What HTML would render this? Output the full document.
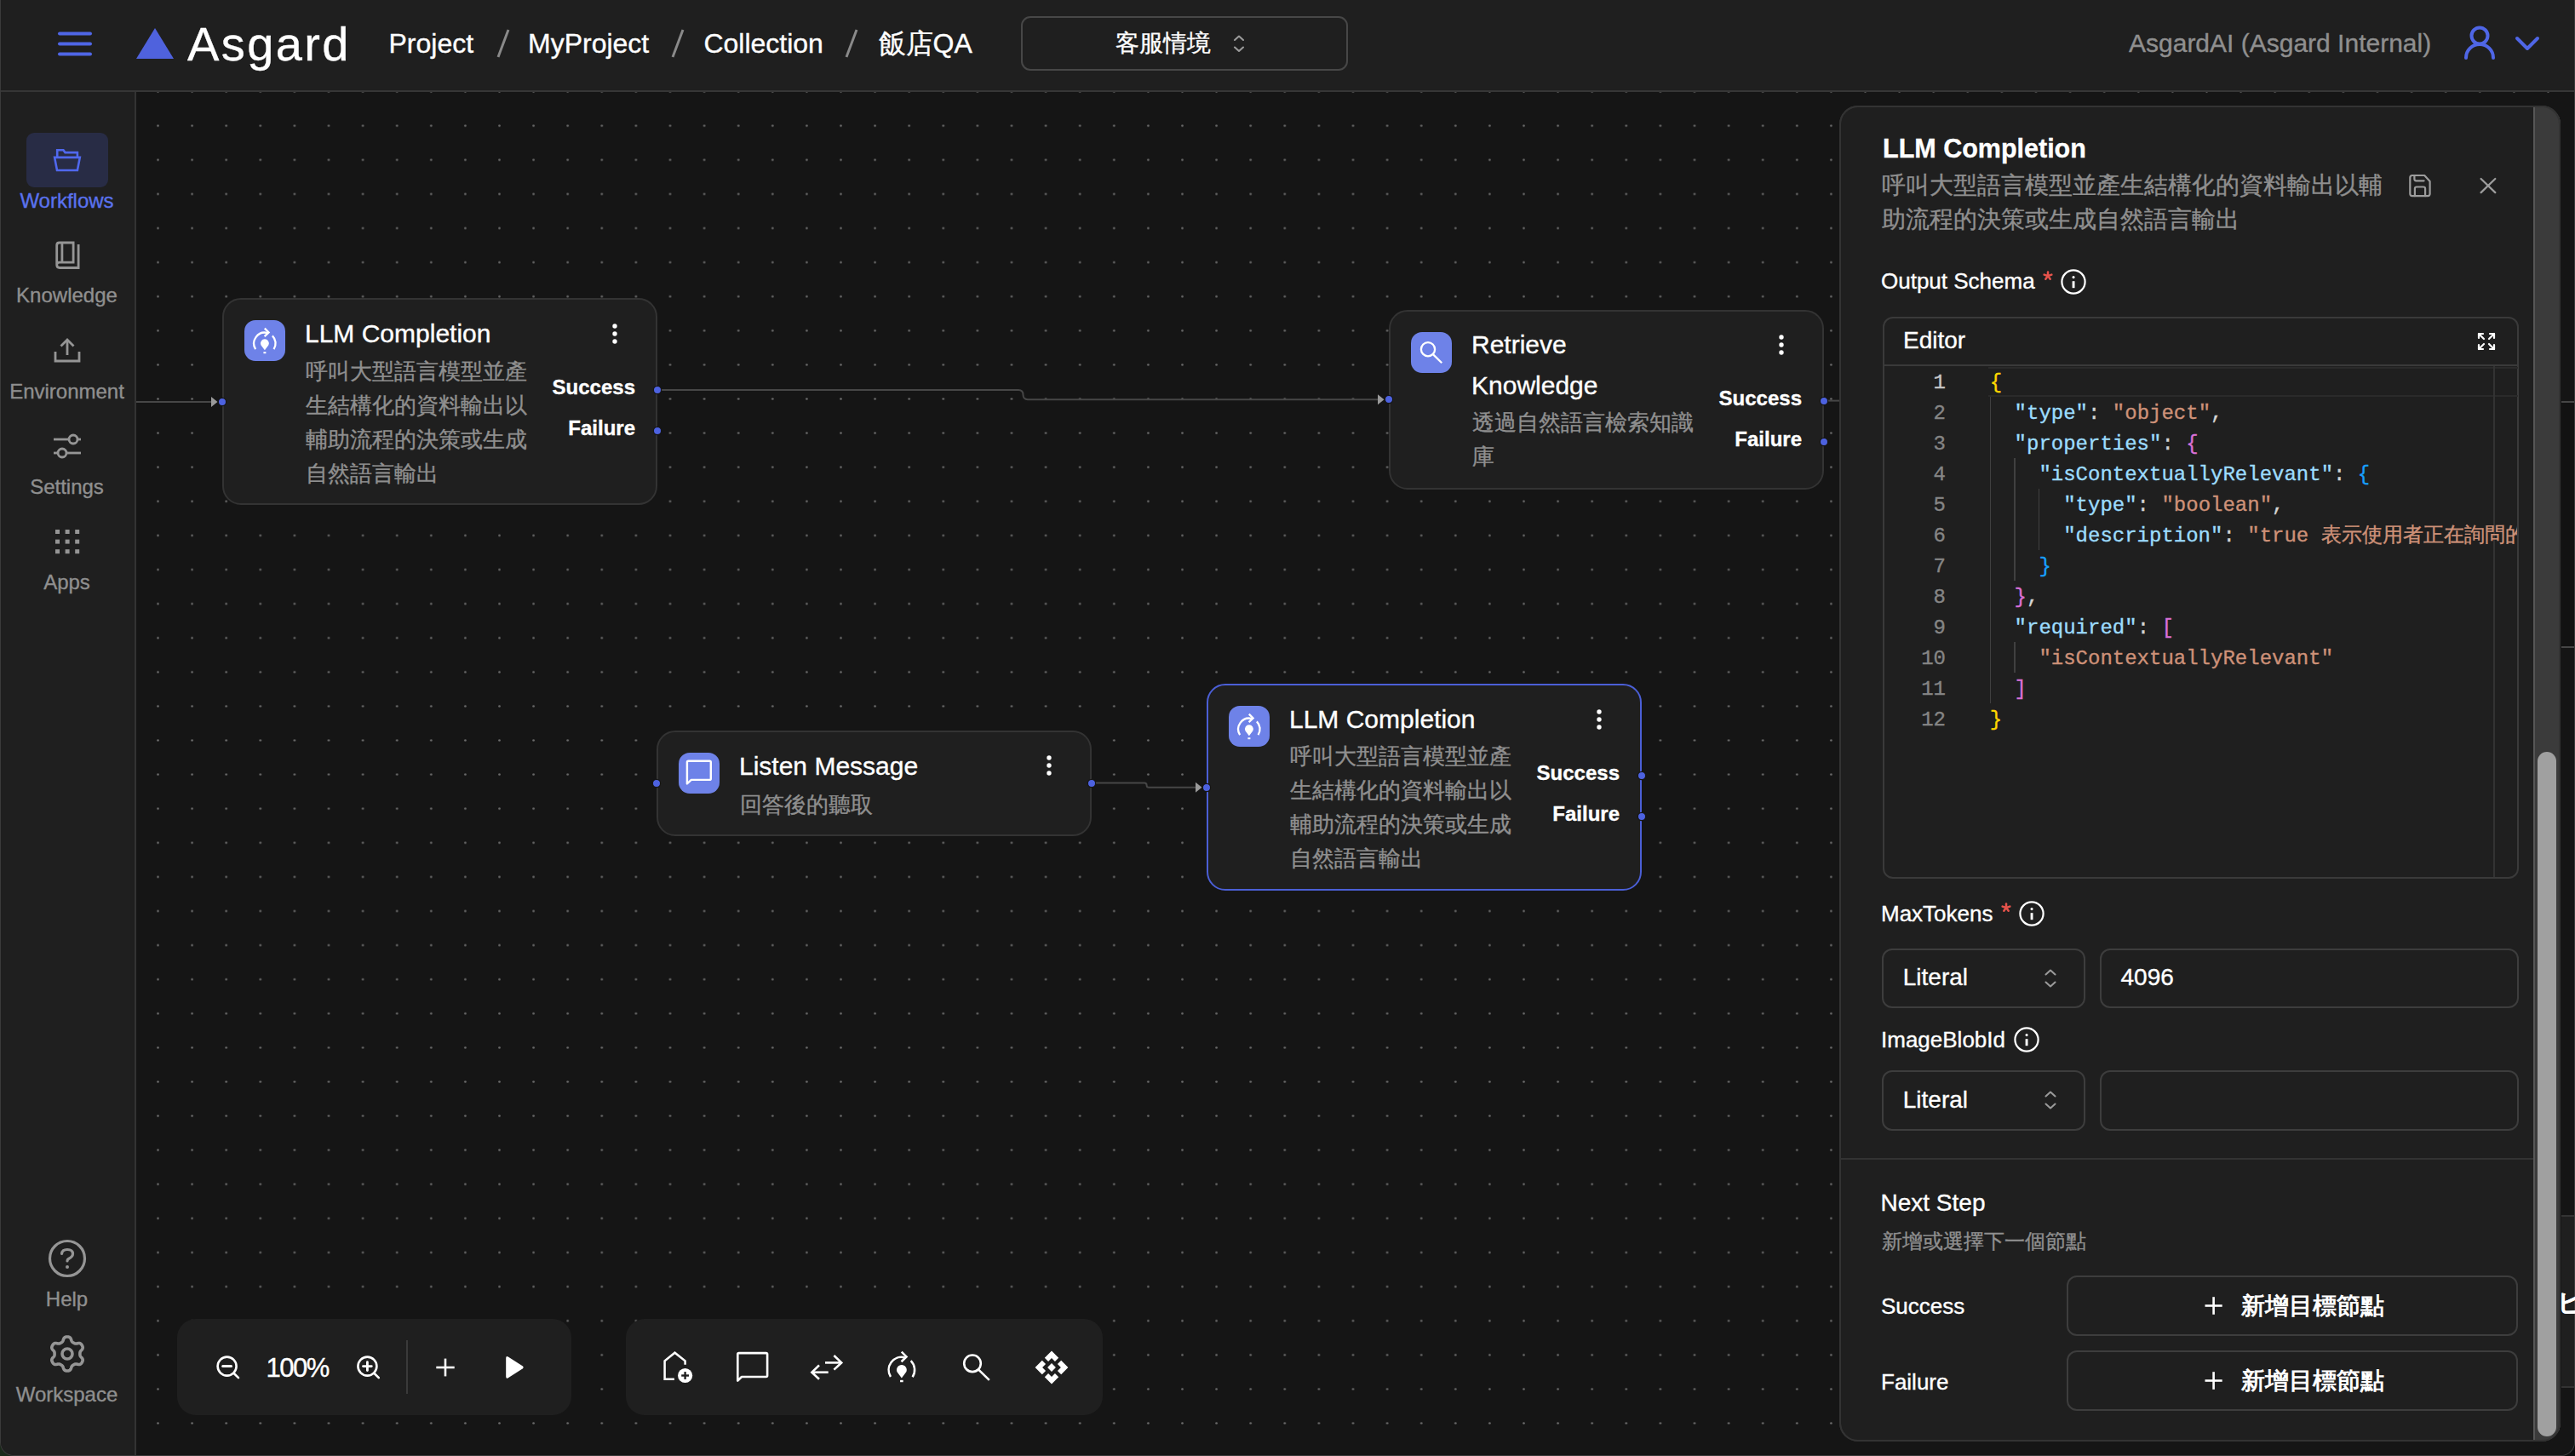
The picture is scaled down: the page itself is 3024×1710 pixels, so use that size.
<!DOCTYPE html><html><head><meta charset='utf-8'><style>
html,body{margin:0;padding:0;}
body{width:3024px;height:1710px;overflow:hidden;position:relative;background:#121212;font-family:'Liberation Sans', sans-serif;}
.t{position:absolute;white-space:nowrap;-webkit-text-stroke:0.35px currentColor;}
.b{position:absolute;box-sizing:border-box;}
.s{position:absolute;overflow:visible;}
</style></head><body>
<div class='b' style="left:0px;top:1680px;width:40px;height:30px;background:#1b2a1b;"></div>
<div class='b' style="left:2984px;top:1680px;width:40px;height:30px;background:#0c0c0c;"></div>
<div class='b' style="left:0px;top:0px;width:3024px;height:1710px;background:#1f1f1f;border-radius:0 0 16px 16px;overflow:hidden;border-left:1px solid #3a3a3a;border-right:1px solid #3a3a3a;border-bottom:1px solid #3a3a3a;"></div>
<div class='b' style="left:160px;top:108px;width:2863px;height:1601px;background:#151515;border-radius:0 0 16px 0;"></div>
<svg class='s' style='left:160px;top:108px' width='2863' height='1601'><defs><pattern id='dots' patternUnits='userSpaceOnUse' x='5.449999999999999' y='19.649999999999988' width='40.1' height='40.1'><circle cx='20.05' cy='20.05' r='1.3' fill='#6c6c6c'/></pattern></defs><rect x='0' y='0' width='2863' height='1601' fill='url(#dots)'/></svg>
<div class='b' style="left:1px;top:0px;width:3022px;height:106px;background:#1f1f1f;"></div>
<div class='b' style="left:1px;top:106px;width:3022px;height:2px;background:#363636;"></div>
<div class='b' style="left:1px;top:108px;width:157px;height:1601px;background:#1f1f1f;border-radius:0 0 0 16px;"></div>
<div class='b' style="left:158px;top:108px;width:2px;height:1601px;background:#333333;"></div>
<svg class='s' style='left:60px;top:30px;' width='56' height='42' viewBox='0 0 56 42'><g stroke='#4f66e6' stroke-width='4' stroke-linecap='round'><line x1='10' y1='9.5' x2='46' y2='9.5'/><line x1='10' y1='21.5' x2='46' y2='21.5'/><line x1='10' y1='33.5' x2='46' y2='33.5'/></g></svg>
<svg class='s' style='left:155px;top:28px;' width='54' height='46' viewBox='0 0 54 46'><polygon points='5,41 27,5 49,41' fill='#4f62dd'/></svg>
<div class='t' style="left:220px;top:24px;font-size:56px;line-height:56px;color:#ffffff;font-weight:400;font-family:'Liberation Sans', sans-serif;letter-spacing:2.4px;">Asgard</div>
<div class='t' style="left:456.5px;top:35.2px;font-size:32px;line-height:32px;color:#ffffff;font-weight:400;font-family:'Liberation Sans', sans-serif;">Project</div>
<div class='t' style="left:620px;top:35.2px;font-size:32px;line-height:32px;color:#ffffff;font-weight:400;font-family:'Liberation Sans', sans-serif;">MyProject</div>
<div class='t' style="left:826.4px;top:35.2px;font-size:32px;line-height:32px;color:#ffffff;font-weight:400;font-family:'Liberation Sans', sans-serif;">Collection</div>
<div class='t' style="left:1031.5px;top:35.2px;font-size:32px;line-height:32px;color:#ffffff;font-weight:400;font-family:'Liberation Sans', sans-serif;">飯店QA</div>
<svg class='s' style='left:582.6px;top:33px;' width='18' height='36' viewBox='0 0 18 36'><line x1='14' y1='2' x2='2' y2='34' stroke='#8a8a8a' stroke-width='3'/></svg>
<svg class='s' style='left:788px;top:33px;' width='18' height='36' viewBox='0 0 18 36'><line x1='14' y1='2' x2='2' y2='34' stroke='#8a8a8a' stroke-width='3'/></svg>
<svg class='s' style='left:992px;top:33px;' width='18' height='36' viewBox='0 0 18 36'><line x1='14' y1='2' x2='2' y2='34' stroke='#8a8a8a' stroke-width='3'/></svg>
<div class='b' style="left:1199px;top:19px;width:384px;height:64px;border:2px solid #474747;border-radius:11px;"></div>
<div class='t' style="left:1310px;top:36.9px;font-size:28px;line-height:28px;color:#ffffff;font-weight:400;font-family:'Liberation Sans', sans-serif;">客服情境</div>
<svg class='s' style='left:1445px;top:38px;' width='20' height='26' viewBox='0 0 20 26'><g fill='none' stroke='#9a9a9a' stroke-width='2.1' stroke-linecap='round' stroke-linejoin='round'><polyline points='5,9 10,4.5 15,9'/><polyline points='5,17.5 10,22 15,17.5'/></g></svg>
<div class='t' style="left:2500px;top:35.8px;font-size:30px;line-height:30px;color:#8f8f8f;font-weight:400;font-family:'Liberation Sans', sans-serif;">AsgardAI (Asgard Internal)</div>
<svg class='s' style='left:2888px;top:28px;' width='48' height='46' viewBox='0 0 48 46'><g fill='none' stroke='#4f66e6' stroke-width='4' stroke-linecap='round'><circle cx='24' cy='14' r='9.5'/><path d='M8 40 A16 16 0 0 1 40 40'/></g></svg>
<svg class='s' style='left:2950px;top:38px;' width='36' height='26' viewBox='0 0 36 26'><polyline points='6,7 18,19 30,7' fill='none' stroke='#4f66e6' stroke-width='4' stroke-linecap='round' stroke-linejoin='round'/></svg>
<div class='b' style="left:31px;top:156px;width:96px;height:64px;background:#282c45;border-radius:9px;"></div>
<svg class='s' style='left:55px;top:165px;' width='50' height='50' viewBox='0 0 50 50'><g fill='none' stroke='#5068ee' stroke-width='2.6' stroke-linejoin='miter'><path d='M12.2 20.3 V11.2 H19.4 L21.5 14.1 H35.9 V20.3'/><path d='M9.1 19.9 H38.8 L35.9 35 H12 Z'/></g></svg>
<div class='t' style="left:3.5px;width:150px;text-align:center;top:223.6px;font-size:24px;line-height:24px;color:#5a72ee;font-weight:400;font-family:'Liberation Sans', sans-serif;">Workflows</div>
<svg class='s' style='left:55px;top:275px;' width='50' height='50' viewBox='0 0 50 50'><g fill='none' stroke='#959595' stroke-width='2.8'><path d='M11.7 36 V13 Q11.7 10 14.7 10 H31.1 V33.1 H14.7 Q11.7 33.1 11.7 36 Q11.7 39.5 15 39.5 H37.1 V12'/><line x1='17.9' y1='10' x2='17.9' y2='33.1'/></g></svg>
<div class='t' style="left:3.5px;width:150px;text-align:center;top:334.6px;font-size:24px;line-height:24px;color:#8f8f8f;font-weight:400;font-family:'Liberation Sans', sans-serif;">Knowledge</div>
<svg class='s' style='left:55px;top:390px;' width='50' height='40' viewBox='0 0 50 40'><g fill='none' stroke='#959595' stroke-width='2.8'><path d='M10 23 V34 H38 V23'/><line x1='24' y1='10' x2='24' y2='27'/><polyline points='16.5,16.5 24,9 31.5,16.5' stroke-linejoin='miter'/></g></svg>
<div class='t' style="left:3.5px;width:150px;text-align:center;top:447.6px;font-size:24px;line-height:24px;color:#8f8f8f;font-weight:400;font-family:'Liberation Sans', sans-serif;">Environment</div>
<svg class='s' style='left:55px;top:500px;' width='50' height='45' viewBox='0 0 50 45'><g fill='none' stroke='#959595' stroke-width='2.8'><line x1='8' y1='16' x2='26' y2='16'/><circle cx='31' cy='16' r='5'/><line x1='36' y1='16' x2='40' y2='16'/><line x1='8' y1='32' x2='13' y2='32'/><circle cx='18' cy='32' r='5'/><line x1='23' y1='32' x2='40' y2='32'/></g></svg>
<div class='t' style="left:3.5px;width:150px;text-align:center;top:559.6px;font-size:24px;line-height:24px;color:#8f8f8f;font-weight:400;font-family:'Liberation Sans', sans-serif;">Settings</div>
<svg class='s' style='left:55px;top:620px;' width='50' height='40' viewBox='0 0 50 40'><rect x='10.0' y='2.0' width='5' height='5' fill='#959595'/><rect x='10.0' y='13.6' width='5' height='5' fill='#959595'/><rect x='10.0' y='25.2' width='5' height='5' fill='#959595'/><rect x='21.6' y='2.0' width='5' height='5' fill='#959595'/><rect x='21.6' y='13.6' width='5' height='5' fill='#959595'/><rect x='21.6' y='25.2' width='5' height='5' fill='#959595'/><rect x='33.2' y='2.0' width='5' height='5' fill='#959595'/><rect x='33.2' y='13.6' width='5' height='5' fill='#959595'/><rect x='33.2' y='25.2' width='5' height='5' fill='#959595'/></svg>
<div class='t' style="left:3.5px;width:150px;text-align:center;top:671.6px;font-size:24px;line-height:24px;color:#8f8f8f;font-weight:400;font-family:'Liberation Sans', sans-serif;">Apps</div>
<svg class='s' style='left:55px;top:1454px;' width='50' height='50' viewBox='0 0 50 50'><g fill='none' stroke='#959595' stroke-width='3.2' stroke-linecap='round'><circle cx='24' cy='24' r='20.5'/><path d='M17.5 18.5 Q18 13.5 24 13.5 Q30.5 13.5 30.5 18.5 Q30.5 22 25.5 24.5 Q24 25.3 24 27'/></g><circle cx='24' cy='34' r='2' fill='#959595'/></svg>
<div class='t' style="left:3.5px;width:150px;text-align:center;top:1513.6px;font-size:24px;line-height:24px;color:#8f8f8f;font-weight:400;font-family:'Liberation Sans', sans-serif;">Help</div>
<svg class='s' style='left:55px;top:1566px;' width='50' height='50' viewBox='0 0 50 50'><g fill='none' stroke='#959595' stroke-width='3.6' stroke-linejoin='round'><polygon points='24.00,4.00 24.35,4.01 24.70,4.03 25.04,4.06 25.39,4.11 25.73,4.18 26.07,4.28 26.41,4.40 26.73,4.56 27.05,4.76 27.35,5.01 27.63,5.32 27.89,5.69 28.13,6.13 28.33,6.62 28.52,7.14 28.68,7.67 28.84,8.16 29.00,8.61 29.17,9.00 29.34,9.33 29.52,9.61 29.72,9.85 29.92,10.05 30.13,10.23 30.34,10.40 30.56,10.55 30.78,10.69 31.00,10.83 31.23,10.96 31.45,11.10 31.68,11.23 31.90,11.35 32.13,11.47 32.37,11.59 32.61,11.71 32.86,11.81 33.12,11.90 33.40,11.97 33.70,12.02 34.04,12.04 34.41,12.03 34.83,11.97 35.30,11.89 35.80,11.78 36.34,11.66 36.88,11.56 37.41,11.49 37.91,11.48 38.36,11.51 38.77,11.60 39.14,11.74 39.47,11.91 39.77,12.12 40.04,12.34 40.29,12.59 40.53,12.85 40.74,13.13 40.95,13.41 41.14,13.70 41.32,14.00 41.49,14.31 41.65,14.62 41.79,14.94 41.92,15.26 42.03,15.59 42.12,15.93 42.18,16.28 42.21,16.64 42.19,17.02 42.12,17.40 42.00,17.80 41.80,18.22 41.54,18.64 41.21,19.06 40.86,19.48 40.49,19.89 40.14,20.27 39.83,20.64 39.58,20.97 39.38,21.29 39.23,21.59 39.12,21.88 39.04,22.15 38.99,22.42 38.95,22.69 38.93,22.96 38.91,23.22 38.91,23.48 38.90,23.74 38.90,24.00 38.90,24.26 38.91,24.52 38.91,24.78 38.93,25.04 38.95,25.31 38.99,25.58 39.04,25.85 39.12,26.12 39.23,26.41 39.38,26.71 39.58,27.03 39.83,27.36 40.14,27.73 40.49,28.11 40.86,28.52 41.21,28.94 41.54,29.36 41.80,29.78 42.00,30.20 42.12,30.60 42.19,30.98 42.21,31.36 42.18,31.72 42.12,32.07 42.03,32.41 41.92,32.74 41.79,33.06 41.65,33.38 41.49,33.69 41.32,34.00 41.14,34.30 40.95,34.59 40.74,34.87 40.53,35.15 40.29,35.41 40.04,35.66 39.77,35.88 39.47,36.09 39.14,36.26 38.77,36.40 38.36,36.49 37.91,36.52 37.41,36.51 36.88,36.44 36.34,36.34 35.80,36.22 35.30,36.11 34.83,36.03 34.41,35.97 34.04,35.96 33.70,35.98 33.40,36.03 33.12,36.10 32.86,36.19 32.61,36.29 32.37,36.41 32.13,36.53 31.90,36.65 31.68,36.77 31.45,36.90 31.23,37.04 31.00,37.17 30.78,37.31 30.56,37.45 30.34,37.60 30.13,37.77 29.92,37.95 29.72,38.15 29.52,38.39 29.34,38.67 29.17,39.00 29.00,39.39 28.84,39.84 28.68,40.33 28.52,40.86 28.33,41.38 28.13,41.87 27.89,42.31 27.63,42.68 27.35,42.99 27.05,43.24 26.73,43.44 26.41,43.60 26.07,43.72 25.73,43.82 25.39,43.89 25.04,43.94 24.70,43.97 24.35,43.99 24.00,44.00 23.65,43.99 23.30,43.97 22.96,43.94 22.61,43.89 22.27,43.82 21.93,43.72 21.59,43.60 21.27,43.44 20.95,43.24 20.65,42.99 20.37,42.68 20.11,42.31 19.87,41.87 19.67,41.38 19.48,40.86 19.32,40.33 19.16,39.84 19.00,39.39 18.83,39.00 18.66,38.67 18.48,38.39 18.28,38.15 18.08,37.95 17.87,37.77 17.66,37.60 17.44,37.45 17.22,37.31 17.00,37.17 16.77,37.04 16.55,36.90 16.32,36.77 16.10,36.65 15.87,36.53 15.63,36.41 15.39,36.29 15.14,36.19 14.88,36.10 14.60,36.03 14.30,35.98 13.96,35.96 13.59,35.97 13.17,36.03 12.70,36.11 12.20,36.22 11.66,36.34 11.12,36.44 10.59,36.51 10.09,36.52 9.64,36.49 9.23,36.40 8.86,36.26 8.53,36.09 8.23,35.88 7.96,35.66 7.71,35.41 7.47,35.15 7.26,34.87 7.05,34.59 6.86,34.30 6.68,34.00 6.51,33.69 6.35,33.38 6.21,33.06 6.08,32.74 5.97,32.41 5.88,32.07 5.82,31.72 5.79,31.36 5.81,30.98 5.88,30.60 6.00,30.20 6.20,29.78 6.46,29.36 6.79,28.94 7.14,28.52 7.51,28.11 7.86,27.73 8.17,27.36 8.42,27.03 8.62,26.71 8.77,26.41 8.88,26.12 8.96,25.85 9.01,25.58 9.05,25.31 9.07,25.04 9.09,24.78 9.09,24.52 9.10,24.26 9.10,24.00 9.10,23.74 9.09,23.48 9.09,23.22 9.07,22.96 9.05,22.69 9.01,22.42 8.96,22.15 8.88,21.88 8.77,21.59 8.62,21.29 8.42,20.97 8.17,20.64 7.86,20.27 7.51,19.89 7.14,19.48 6.79,19.06 6.46,18.64 6.20,18.22 6.00,17.80 5.88,17.40 5.81,17.02 5.79,16.64 5.82,16.28 5.88,15.93 5.97,15.59 6.08,15.26 6.21,14.94 6.35,14.62 6.51,14.31 6.68,14.00 6.86,13.70 7.05,13.41 7.26,13.13 7.47,12.85 7.71,12.59 7.96,12.34 8.23,12.12 8.53,11.91 8.86,11.74 9.23,11.60 9.64,11.51 10.09,11.48 10.59,11.49 11.12,11.56 11.66,11.66 12.20,11.78 12.70,11.89 13.17,11.97 13.59,12.03 13.96,12.04 14.30,12.02 14.60,11.97 14.88,11.90 15.14,11.81 15.39,11.71 15.63,11.59 15.87,11.47 16.10,11.35 16.32,11.23 16.55,11.10 16.77,10.96 17.00,10.83 17.22,10.69 17.44,10.55 17.66,10.40 17.87,10.23 18.08,10.05 18.28,9.85 18.48,9.61 18.66,9.33 18.83,9.00 19.00,8.61 19.16,8.16 19.32,7.67 19.48,7.14 19.67,6.62 19.87,6.13 20.11,5.69 20.37,5.32 20.65,5.01 20.95,4.76 21.27,4.56 21.59,4.40 21.93,4.28 22.27,4.18 22.61,4.11 22.96,4.06 23.30,4.03 23.65,4.01 24.00,4.00'/><circle cx='24' cy='24' r='6'/></g></svg>
<div class='t' style="left:3.5px;width:150px;text-align:center;top:1625.6px;font-size:24px;line-height:24px;color:#8f8f8f;font-weight:400;font-family:'Liberation Sans', sans-serif;">Workspace</div>
<svg class='s' style='left:0;top:0' width='3024' height='1710' viewBox='0 0 3024 1710'>
<path d='M160 472 H249' stroke='#464646' stroke-width='2' fill='none'/>
<path d='M772 458 H1196 Q1201.5 458 1201.5 463.6 Q1201.5 469.2 1207 469.2 H1619' stroke='#464646' stroke-width='2' fill='none'/>
<path d='M2142 470.6 H2162' stroke='#464646' stroke-width='2' fill='none'/>
<path d='M1282 919.6 H1344 Q1346.6 919.6 1346.6 922.2 Q1346.6 924.8 1349.2 924.8 H1405' stroke='#464646' stroke-width='2' fill='none'/>
<polygon points='248,466 255.5,472 248,478' fill='#9a9a9a'/><polygon points='1618,463.2 1625.5,469.2 1618,475.2' fill='#9a9a9a'/><polygon points='1404,918.8 1411.5,924.8 1404,930.8' fill='#9a9a9a'/></svg>
<div class='b' style="left:261px;top:350px;width:511px;height:243px;background:#1f1f1f;border:2px solid #333333;border-radius:22px;"></div>
<div class='b' style="left:287px;top:376px;width:48px;height:48px;background:#6e82e8;border-radius:13px;"></div>
<svg class='s' style='left:287px;top:376px;' width='48' height='48' viewBox='0 0 48 48'><g fill='none' stroke='#fff' stroke-width='2.3' stroke-linecap='butt'>
<path d='M13.13 34.03 A12.7 12.7 0 0 1 26.97 14.98'/>
<path d='M32.88 18.32 A12.7 12.7 0 0 1 34.55 34.22'/>
<polyline points='23.8,9.6 28.6,14.4 23.6,19.2' stroke-linejoin='miter'/>
</g>
<path d='M23.9 22.3 A4.9 4.9 0 0 1 28.4 29.2 L23.9 35.2 L19.4 29.2 A4.9 4.9 0 0 1 23.9 22.3 Z' fill='#fff'/>
<rect x='22.4' y='37.2' width='3' height='2' fill='#fff'/></svg>
<div class='t' style="left:358px;top:376.5px;font-size:30px;line-height:30px;color:#ffffff;font-weight:400;font-family:'Liberation Sans', sans-serif;">LLM Completion</div>
<div class='t' style="left:359px;top:416px;font-size:26px;line-height:40px;color:#8f8f8f;font-weight:400;font-family:'Liberation Sans', sans-serif;">呼叫大型語言模型並產</div>
<div class='t' style="left:359px;top:456px;font-size:26px;line-height:40px;color:#8f8f8f;font-weight:400;font-family:'Liberation Sans', sans-serif;">生結構化的資料輸出以</div>
<div class='t' style="left:359px;top:496px;font-size:26px;line-height:40px;color:#8f8f8f;font-weight:400;font-family:'Liberation Sans', sans-serif;">輔助流程的決策或生成</div>
<div class='t' style="left:359px;top:536px;font-size:26px;line-height:40px;color:#8f8f8f;font-weight:400;font-family:'Liberation Sans', sans-serif;">自然語言輸出</div>
<svg class='s' style='left:717px;top:378.5px;' width='10' height='28' viewBox='0 0 10 28'><g fill='#fff'><circle cx='5' cy='4' r='2.7'/><circle cx='5' cy='13' r='2.7'/><circle cx='5' cy='22' r='2.7'/></g></svg>
<div class='t' style="left:596px;width:150px;text-align:right;top:443px;font-size:24px;line-height:24px;color:#ffffff;font-weight:700;font-family:'Liberation Sans', sans-serif;">Success</div>
<div class='t' style="left:596px;width:150px;text-align:right;top:491px;font-size:24px;line-height:24px;color:#ffffff;font-weight:700;font-family:'Liberation Sans', sans-serif;">Failure</div>
<svg class='s' style='left:765px;top:451px;' width='14' height='14' viewBox='0 0 14 14'><circle cx='7' cy='7' r='4.6' fill='#4d62e0' stroke='#151515' stroke-width='1.2'/></svg>
<svg class='s' style='left:765px;top:499px;' width='14' height='14' viewBox='0 0 14 14'><circle cx='7' cy='7' r='4.6' fill='#4d62e0' stroke='#151515' stroke-width='1.2'/></svg>
<svg class='s' style='left:253.5px;top:464.5px;' width='14' height='14' viewBox='0 0 14 14'><circle cx='7' cy='7' r='4.6' fill='#4d62e0' stroke='#151515' stroke-width='1.2'/></svg>
<div class='b' style="left:1631px;top:363.5px;width:511px;height:211px;background:#1f1f1f;border:2px solid #333333;border-radius:22px;"></div>
<div class='b' style="left:1657px;top:389.5px;width:48px;height:48px;background:#6e82e8;border-radius:13px;"></div>
<svg class='s' style='left:1657px;top:389.5px;' width='48' height='48' viewBox='0 0 48 48'><g fill='none' stroke='#fff' stroke-width='2.3'><circle cx='20' cy='20.2' r='8.1'/><line x1='25.9' y1='26.1' x2='36.2' y2='36.2'/></g></svg>
<div class='t' style="left:1728px;top:390.0px;font-size:30px;line-height:30px;color:#ffffff;font-weight:400;font-family:'Liberation Sans', sans-serif;">Retrieve</div>
<div class='t' style="left:1728px;top:438.0px;font-size:30px;line-height:30px;color:#ffffff;font-weight:400;font-family:'Liberation Sans', sans-serif;">Knowledge</div>
<div class='t' style="left:1729px;top:476.0px;font-size:26px;line-height:40px;color:#8f8f8f;font-weight:400;font-family:'Liberation Sans', sans-serif;">透過自然語言檢索知識</div>
<div class='t' style="left:1729px;top:516.0px;font-size:26px;line-height:40px;color:#8f8f8f;font-weight:400;font-family:'Liberation Sans', sans-serif;">庫</div>
<svg class='s' style='left:2087px;top:392.0px;' width='10' height='28' viewBox='0 0 10 28'><g fill='#fff'><circle cx='5' cy='4' r='2.7'/><circle cx='5' cy='13' r='2.7'/><circle cx='5' cy='22' r='2.7'/></g></svg>
<div class='t' style="left:1966px;width:150px;text-align:right;top:456.0px;font-size:24px;line-height:24px;color:#ffffff;font-weight:700;font-family:'Liberation Sans', sans-serif;">Success</div>
<div class='t' style="left:1966px;width:150px;text-align:right;top:504.0px;font-size:24px;line-height:24px;color:#ffffff;font-weight:700;font-family:'Liberation Sans', sans-serif;">Failure</div>
<svg class='s' style='left:2135px;top:464.0px;' width='14' height='14' viewBox='0 0 14 14'><circle cx='7' cy='7' r='4.6' fill='#4d62e0' stroke='#151515' stroke-width='1.2'/></svg>
<svg class='s' style='left:2135px;top:512.0px;' width='14' height='14' viewBox='0 0 14 14'><circle cx='7' cy='7' r='4.6' fill='#4d62e0' stroke='#151515' stroke-width='1.2'/></svg>
<svg class='s' style='left:1623.5px;top:462.0px;' width='14' height='14' viewBox='0 0 14 14'><circle cx='7' cy='7' r='4.6' fill='#4d62e0' stroke='#151515' stroke-width='1.2'/></svg>
<div class='b' style="left:771px;top:857.5px;width:511px;height:124px;background:#1f1f1f;border:2px solid #333333;border-radius:22px;"></div>
<div class='b' style="left:797px;top:883.5px;width:48px;height:48px;background:#6e82e8;border-radius:13px;"></div>
<svg class='s' style='left:797px;top:883.5px;' width='48' height='48' viewBox='0 0 48 48'><path d='M9.9 36.5 V11.3 Q9.9 9.8 11.4 9.8 H36.3 Q37.8 9.8 37.8 11.3 V30.4 Q37.8 31.9 36.3 31.9 H14.8 Z' fill='none' stroke='#fff' stroke-width='2.4' stroke-linejoin='round'/></svg>
<div class='t' style="left:868px;top:884.5px;font-size:30px;line-height:30px;color:#ffffff;font-weight:400;font-family:'Liberation Sans', sans-serif;">Listen Message</div>
<div class='t' style="left:869px;top:924.5px;font-size:26px;line-height:40px;color:#8f8f8f;font-weight:400;font-family:'Liberation Sans', sans-serif;">回答後的聽取</div>
<svg class='s' style='left:1227px;top:886.0px;' width='10' height='28' viewBox='0 0 10 28'><g fill='#fff'><circle cx='5' cy='4' r='2.7'/><circle cx='5' cy='13' r='2.7'/><circle cx='5' cy='22' r='2.7'/></g></svg>
<svg class='s' style='left:1275px;top:912.5px;' width='14' height='14' viewBox='0 0 14 14'><circle cx='7' cy='7' r='4.6' fill='#4d62e0' stroke='#151515' stroke-width='1.2'/></svg>
<svg class='s' style='left:763.5px;top:912.5px;' width='14' height='14' viewBox='0 0 14 14'><circle cx='7' cy='7' r='4.6' fill='#4d62e0' stroke='#151515' stroke-width='1.2'/></svg>
<div class='b' style="left:1417px;top:803px;width:511px;height:243px;background:#1f1f1f;border:2px solid #4b5fd6;border-radius:22px;"></div>
<div class='b' style="left:1443px;top:829px;width:48px;height:48px;background:#6e82e8;border-radius:13px;"></div>
<svg class='s' style='left:1443px;top:829px;' width='48' height='48' viewBox='0 0 48 48'><g fill='none' stroke='#fff' stroke-width='2.3' stroke-linecap='butt'>
<path d='M13.13 34.03 A12.7 12.7 0 0 1 26.97 14.98'/>
<path d='M32.88 18.32 A12.7 12.7 0 0 1 34.55 34.22'/>
<polyline points='23.8,9.6 28.6,14.4 23.6,19.2' stroke-linejoin='miter'/>
</g>
<path d='M23.9 22.3 A4.9 4.9 0 0 1 28.4 29.2 L23.9 35.2 L19.4 29.2 A4.9 4.9 0 0 1 23.9 22.3 Z' fill='#fff'/>
<rect x='22.4' y='37.2' width='3' height='2' fill='#fff'/></svg>
<div class='t' style="left:1514px;top:829.5px;font-size:30px;line-height:30px;color:#ffffff;font-weight:400;font-family:'Liberation Sans', sans-serif;">LLM Completion</div>
<div class='t' style="left:1515px;top:868px;font-size:26px;line-height:40px;color:#8f8f8f;font-weight:400;font-family:'Liberation Sans', sans-serif;">呼叫大型語言模型並產</div>
<div class='t' style="left:1515px;top:908px;font-size:26px;line-height:40px;color:#8f8f8f;font-weight:400;font-family:'Liberation Sans', sans-serif;">生結構化的資料輸出以</div>
<div class='t' style="left:1515px;top:948px;font-size:26px;line-height:40px;color:#8f8f8f;font-weight:400;font-family:'Liberation Sans', sans-serif;">輔助流程的決策或生成</div>
<div class='t' style="left:1515px;top:988px;font-size:26px;line-height:40px;color:#8f8f8f;font-weight:400;font-family:'Liberation Sans', sans-serif;">自然語言輸出</div>
<svg class='s' style='left:1873px;top:831.5px;' width='10' height='28' viewBox='0 0 10 28'><g fill='#fff'><circle cx='5' cy='4' r='2.7'/><circle cx='5' cy='13' r='2.7'/><circle cx='5' cy='22' r='2.7'/></g></svg>
<div class='t' style="left:1752px;width:150px;text-align:right;top:895.5px;font-size:24px;line-height:24px;color:#ffffff;font-weight:700;font-family:'Liberation Sans', sans-serif;">Success</div>
<div class='t' style="left:1752px;width:150px;text-align:right;top:943.5px;font-size:24px;line-height:24px;color:#ffffff;font-weight:700;font-family:'Liberation Sans', sans-serif;">Failure</div>
<svg class='s' style='left:1921px;top:903.5px;' width='14' height='14' viewBox='0 0 14 14'><circle cx='7' cy='7' r='4.6' fill='#4d62e0' stroke='#151515' stroke-width='1.2'/></svg>
<svg class='s' style='left:1921px;top:951.5px;' width='14' height='14' viewBox='0 0 14 14'><circle cx='7' cy='7' r='4.6' fill='#4d62e0' stroke='#151515' stroke-width='1.2'/></svg>
<svg class='s' style='left:1409.5px;top:917.5px;' width='14' height='14' viewBox='0 0 14 14'><circle cx='7' cy='7' r='4.6' fill='#4d62e0' stroke='#151515' stroke-width='1.2'/></svg>
<div class='b' style="left:208px;top:1549px;width:463px;height:112.5px;background:#1f1f1f;border-radius:22px;"></div>
<svg class='s' style='left:248px;top:1586px;' width='40' height='40' viewBox='0 0 40 40'><g fill='none' stroke='#fff' stroke-width='2.6' stroke-linecap='round'><circle cx='18.6' cy='18.6' r='11'/><line x1='26.8' y1='27' x2='32' y2='32.2'/><line x1='13.7' y1='18.6' x2='23.5' y2='18.6' stroke-width='3'/></g></svg>
<div class='t' style="left:312.5px;top:1590.8px;font-size:31px;line-height:31px;color:#ffffff;font-weight:400;font-family:'Liberation Sans', sans-serif;letter-spacing:-1.5px;">100%</div>
<svg class='s' style='left:413px;top:1586px;' width='40' height='40' viewBox='0 0 40 40'><g fill='none' stroke='#fff' stroke-width='2.6' stroke-linecap='round'><circle cx='18.4' cy='18.6' r='11'/><line x1='26.6' y1='27' x2='31.8' y2='32.2'/><line x1='13.5' y1='18.6' x2='23.3' y2='18.6' stroke-width='2.8'/><line x1='18.4' y1='13.7' x2='18.4' y2='23.5' stroke-width='2.8'/></g></svg>
<div class='b' style="left:477px;top:1574px;width:2px;height:63px;background:#3a3a3a;"></div>
<svg class='s' style='left:508px;top:1591px;' width='30' height='30' viewBox='0 0 30 30'><g stroke='#fff' stroke-width='2.6'><line x1='4.3' y1='15' x2='25.7' y2='15'/><line x1='15' y1='4.6' x2='15' y2='25.4'/></g></svg>
<svg class='s' style='left:590px;top:1588px;' width='30' height='36' viewBox='0 0 30 36'><path d='M4.2 7 Q4.2 4 6.8 5.5 L23.6 16.3 Q25.6 17.9 23.6 19.5 L6.8 30.3 Q4.2 31.8 4.2 28.8 Z' fill='#fff'/></svg>
<div class='b' style="left:735px;top:1549px;width:560px;height:112.5px;background:#1f1f1f;border-radius:22px;"></div>
<svg class='s' style='left:770px;top:1580px;' width='50' height='50' viewBox='0 0 50 50'><g fill='none' stroke='#fff' stroke-width='2.5'><path d='M21.9 39.7 H10.6 V18.3 L22.5 8.7 L34.6 18.3 V22.8'/></g><circle cx='34.6' cy='35.5' r='8.6' fill='#fff'/><g stroke='#1f1f1f' stroke-width='2.4'><line x1='30.2' y1='35.5' x2='39' y2='35.5'/><line x1='34.6' y1='31.1' x2='34.6' y2='39.9'/></g></svg>
<svg class='s' style='left:855px;top:1580px;' width='50' height='50' viewBox='0 0 50 50'><path d='M11.3 41.5 V10.5 Q11.3 9.1 12.7 9.1 H44.7 Q46.1 9.1 46.1 10.5 V35.6 Q46.1 37 44.7 37 H16 Z' fill='none' stroke='#fff' stroke-width='2.6' stroke-linejoin='round'/></svg>
<svg class='s' style='left:945px;top:1585px;' width='50' height='40' viewBox='0 0 50 40'><g fill='none' stroke='#fff' stroke-width='2.6' stroke-linejoin='miter'><line x1='24' y1='15.4' x2='43.5' y2='15.4'/><polyline points='34.4,7 43.2,15.4 34.4,23.6'/><line x1='27.7' y1='26.7' x2='8.5' y2='26.7'/><polyline points='17,18.4 8.4,26.7 17,34.7'/></g></svg>
<svg class='s' style='left:1035px;top:1580.5px;transform:scale(1.2);transform-origin:24px 24px;' width='48' height='48' viewBox='0 0 48 48'><g fill='none' stroke='#fff' stroke-width='2.1' stroke-linecap='butt'>
<path d='M13.13 34.03 A12.7 12.7 0 0 1 26.97 14.98'/>
<path d='M32.88 18.32 A12.7 12.7 0 0 1 34.55 34.22'/>
<polyline points='23.8,9.6 28.6,14.4 23.6,19.2' stroke-linejoin='miter'/>
</g>
<path d='M23.9 22.3 A4.9 4.9 0 0 1 28.4 29.2 L23.9 35.2 L19.4 29.2 A4.9 4.9 0 0 1 23.9 22.3 Z' fill='#fff'/>
<rect x='22.4' y='37.2' width='3' height='2' fill='#fff'/></svg>
<svg class='s' style='left:1120px;top:1580px;' width='50' height='50' viewBox='0 0 50 50'><g fill='none' stroke='#fff' stroke-width='2.6'><circle cx='22' cy='21.3' r='9.8'/><line x1='29' y1='28.4' x2='41.8' y2='40.9'/></g></svg>
<svg class='s' style='left:1210px;top:1580.7px;' width='50' height='50' viewBox='0 0 50 50'><polygon points='25,20.1 29.9,25 25,29.9 20.1,25' fill='#fff'/><polygon points='0,-19.4 8.2,-11.2 3.95,-6.95 0,-10.9 -3.95,-6.95 -8.2,-11.2' fill='#fff' transform='translate(25 25) rotate(0)'/><polygon points='0,-19.4 8.2,-11.2 3.95,-6.95 0,-10.9 -3.95,-6.95 -8.2,-11.2' fill='#fff' transform='translate(25 25) rotate(90)'/><polygon points='0,-19.4 8.2,-11.2 3.95,-6.95 0,-10.9 -3.95,-6.95 -8.2,-11.2' fill='#fff' transform='translate(25 25) rotate(180)'/><polygon points='0,-19.4 8.2,-11.2 3.95,-6.95 0,-10.9 -3.95,-6.95 -8.2,-11.2' fill='#fff' transform='translate(25 25) rotate(270)'/></svg>
<div class='b' style="left:3008px;top:1426.6px;width:15px;height:203px;background:#1f1f1f;border-top:2px solid #333;border-bottom:2px solid #333;"></div>
<div class='t' style="left:3003px;top:1515px;font-size:30px;line-height:30px;color:#fff;font-weight:700;font-family:'Liberation Sans', sans-serif;">ヒ</div>
<div class='b' style="left:3008px;top:471px;width:15px;height:288px;background:#121212;"></div>
<div class='b' style="left:3008px;top:470.5px;width:15px;height:2px;background:#464646;"></div>
<div class='b' style="left:3008px;top:758.5px;width:15px;height:2px;background:#464646;"></div>
<div class='b' style="left:2159.5px;top:123.5px;width:847.5px;height:1569px;background:#1f1f1f;border:2px solid #333333;border-radius:22px;overflow:hidden;"></div>
<div class='b' style='left:2159.5px;top:123.5px;width:847.5px;height:1569px;border-radius:22px;overflow:hidden;'><div class='b' style='left:815.0px;top:0;width:32.0px;height:1569px;background:#3b3b3b;border-left:2px solid #565656;border-right:2px solid #4a4a4a;'></div><div class='b' style='left:820.5px;top:759.9px;width:22px;height:804.1px;background:#a0a0a0;border-radius:11px;'></div></div>
<div class='b' style="left:2159.5px;top:123.5px;width:847.5px;height:1569px;border:2px solid #333333;border-radius:22px;"></div>
<div class='t' style="left:2211px;top:158.8px;font-size:30.5px;line-height:30.5px;color:#ffffff;font-weight:700;font-family:'Liberation Sans', sans-serif;">LLM Completion</div>
<div class='t' style="left:2210px;top:197.8px;font-size:28px;line-height:40px;color:#8f8f8f;font-weight:400;font-family:'Liberation Sans', sans-serif;">呼叫大型語言模型並產生結構化的資料輸出以輔</div>
<div class='t' style="left:2210px;top:237.8px;font-size:28px;line-height:40px;color:#8f8f8f;font-weight:400;font-family:'Liberation Sans', sans-serif;">助流程的決策或生成自然語言輸出</div>
<svg class='s' style='left:2825px;top:202px;' width='34' height='34' viewBox='0 0 34 34'><g fill='none' stroke='#9c9c9c' stroke-width='2.2' stroke-linejoin='round' stroke-linecap='round'><path d='M5.3 6.6 Q5.3 4 7.9 4 H22.2 L28.6 10.9 V25.6 Q28.6 28.2 26 28.2 H7.9 Q5.3 28.2 5.3 25.6 Z'/><path d='M10.9 28.2 V19.6 Q10.9 17.5 13 17.5 H21 Q23.1 17.5 23.1 19.6 V28.2'/><path d='M10.4 4 V8.3 Q10.4 10.3 12.4 10.3 H21.6'/></g></svg>
<svg class='s' style='left:2906px;top:204px;' width='32' height='28' viewBox='0 0 32 28'><g stroke='#9c9c9c' stroke-width='2.3' stroke-linecap='round'><line x1='7.6' y1='6' x2='24.3' y2='22.1'/><line x1='24.3' y1='6' x2='7.6' y2='22.1'/></g></svg>
<div class='t' style="left:2209px;top:317.2px;font-size:26px;line-height:26px;color:#ffffff;font-weight:400;font-family:'Liberation Sans', sans-serif;">Output Schema</div>
<svg class='s' style='left:2396.9px;top:315.6px;' width='16' height='16' viewBox='0 0 16 16'><g stroke='#e5534b' stroke-width='2.5' stroke-linecap='round'><line x1='8' y1='8' x2='8.00' y2='3.40'/><line x1='8' y1='8' x2='12.37' y2='6.58'/><line x1='8' y1='8' x2='10.70' y2='11.72'/><line x1='8' y1='8' x2='5.30' y2='11.72'/><line x1='8' y1='8' x2='3.63' y2='6.58'/></g></svg>
<svg class='s' style='left:2418.5px;top:314.7px;' width='32' height='32' viewBox='0 0 32 32'><circle cx='16' cy='16' r='13.6' fill='none' stroke='#fff' stroke-width='2.2'/><rect x='14.6' y='15.2' width='2.9' height='8' fill='#fff'/><circle cx='16.05' cy='10.6' r='1.55' fill='#fff'/></svg>
<div class='b' style="left:2210.5px;top:372px;width:747px;height:659.5px;border:2px solid #3a3a3a;border-radius:12px;"></div>
<div class='t' style="left:2235px;top:386.4px;font-size:28px;line-height:28px;color:#ffffff;font-weight:400;font-family:'Liberation Sans', sans-serif;">Editor</div>
<svg class='s' style='left:2905px;top:386px;' width='30' height='30' viewBox='0 0 30 30'><g fill='none' stroke='#fff' stroke-width='2.2' stroke-linecap='round' stroke-linejoin='round'><polyline points='6,11 6,6 11,6'/><line x1='6' y1='6' x2='12' y2='12'/><polyline points='19,6 24,6 24,11'/><line x1='24' y1='6' x2='18' y2='12'/><polyline points='6,19 6,24 11,24'/><line x1='6' y1='24' x2='12' y2='18'/><polyline points='19,24 24,24 24,19'/><line x1='24' y1='24' x2='18' y2='18'/></g></svg>
<div class='b' style="left:2212.5px;top:428px;width:743px;height:2px;background:#3a3a3a;"></div>
<div class='b' style="left:2335px;top:431px;width:622px;height:34.5px;border-top:2px solid #2a2a2a;border-bottom:2px solid #2a2a2a;"></div>
<div class='b' style="left:2928px;top:430px;width:1.5px;height:600px;background:#333;"></div>
<div class='b' style="left:2336.65px;top:466px;width:1.5px;height:360px;background:#404040;"></div>
<div class='b' style="left:2365.25px;top:538px;width:1.5px;height:144px;background:#404040;"></div>
<div class='b' style="left:2365.25px;top:754px;width:1.5px;height:36px;background:#404040;"></div>
<div class='b' style="left:2393.95px;top:574px;width:1.5px;height:72px;background:#404040;"></div>
<div class='b' style='left:2210.5px;top:372px;width:745.5px;height:659.5px;overflow:hidden;'><div class='t' style='left:-25.5px;width:100px;text-align:right;top:59.5px;font-size:24px;line-height:36px;font-family:&quot;Liberation Mono&quot;, monospace;color:#c6c6c6'>1</div><div class='t' style='left:126.30000000000018px;top:59.5px;font-size:24px;line-height:36px;font-family:&quot;Liberation Mono&quot;, monospace;'><span style='color:#ffd700'>{</span></div><div class='t' style='left:-25.5px;width:100px;text-align:right;top:95.5px;font-size:24px;line-height:36px;font-family:&quot;Liberation Mono&quot;, monospace;color:#858585'>2</div><div class='t' style='left:155.10000000000036px;top:95.5px;font-size:24px;line-height:36px;font-family:&quot;Liberation Mono&quot;, monospace;'><span style='color:#9cdcfe'>"type"</span><span style='color:#d4d4d4'>: </span><span style='color:#ce9178'>"object"</span><span style='color:#d4d4d4'>,</span></div><div class='t' style='left:-25.5px;width:100px;text-align:right;top:131.5px;font-size:24px;line-height:36px;font-family:&quot;Liberation Mono&quot;, monospace;color:#858585'>3</div><div class='t' style='left:155.10000000000036px;top:131.5px;font-size:24px;line-height:36px;font-family:&quot;Liberation Mono&quot;, monospace;'><span style='color:#9cdcfe'>"properties"</span><span style='color:#d4d4d4'>: </span><span style='color:#da70d6'>{</span></div><div class='t' style='left:-25.5px;width:100px;text-align:right;top:167.5px;font-size:24px;line-height:36px;font-family:&quot;Liberation Mono&quot;, monospace;color:#858585'>4</div><div class='t' style='left:183.9000000000001px;top:167.5px;font-size:24px;line-height:36px;font-family:&quot;Liberation Mono&quot;, monospace;'><span style='color:#9cdcfe'>"isContextuallyRelevant"</span><span style='color:#d4d4d4'>: </span><span style='color:#179fff'>{</span></div><div class='t' style='left:-25.5px;width:100px;text-align:right;top:203.5px;font-size:24px;line-height:36px;font-family:&quot;Liberation Mono&quot;, monospace;color:#858585'>5</div><div class='t' style='left:212.70000000000027px;top:203.5px;font-size:24px;line-height:36px;font-family:&quot;Liberation Mono&quot;, monospace;'><span style='color:#9cdcfe'>"type"</span><span style='color:#d4d4d4'>: </span><span style='color:#ce9178'>"boolean"</span><span style='color:#d4d4d4'>,</span></div><div class='t' style='left:-25.5px;width:100px;text-align:right;top:239.5px;font-size:24px;line-height:36px;font-family:&quot;Liberation Mono&quot;, monospace;color:#858585'>6</div><div class='t' style='left:212.70000000000027px;top:239.5px;font-size:24px;line-height:36px;font-family:&quot;Liberation Mono&quot;, monospace;'><span style='color:#9cdcfe'>"description"</span><span style='color:#d4d4d4'>: </span><span style='color:#ce9178'>"true 表示使用者正在詢問的飯店相關問題</span></div><div class='t' style='left:-25.5px;width:100px;text-align:right;top:275.5px;font-size:24px;line-height:36px;font-family:&quot;Liberation Mono&quot;, monospace;color:#858585'>7</div><div class='t' style='left:183.9000000000001px;top:275.5px;font-size:24px;line-height:36px;font-family:&quot;Liberation Mono&quot;, monospace;'><span style='color:#179fff'>}</span></div><div class='t' style='left:-25.5px;width:100px;text-align:right;top:311.5px;font-size:24px;line-height:36px;font-family:&quot;Liberation Mono&quot;, monospace;color:#858585'>8</div><div class='t' style='left:155.10000000000036px;top:311.5px;font-size:24px;line-height:36px;font-family:&quot;Liberation Mono&quot;, monospace;'><span style='color:#da70d6'>}</span><span style='color:#d4d4d4'>,</span></div><div class='t' style='left:-25.5px;width:100px;text-align:right;top:347.5px;font-size:24px;line-height:36px;font-family:&quot;Liberation Mono&quot;, monospace;color:#858585'>9</div><div class='t' style='left:155.10000000000036px;top:347.5px;font-size:24px;line-height:36px;font-family:&quot;Liberation Mono&quot;, monospace;'><span style='color:#9cdcfe'>"required"</span><span style='color:#d4d4d4'>: </span><span style='color:#da70d6'>[</span></div><div class='t' style='left:-25.5px;width:100px;text-align:right;top:383.5px;font-size:24px;line-height:36px;font-family:&quot;Liberation Mono&quot;, monospace;color:#858585'>10</div><div class='t' style='left:183.9000000000001px;top:383.5px;font-size:24px;line-height:36px;font-family:&quot;Liberation Mono&quot;, monospace;'><span style='color:#ce9178'>"isContextuallyRelevant"</span></div><div class='t' style='left:-25.5px;width:100px;text-align:right;top:419.5px;font-size:24px;line-height:36px;font-family:&quot;Liberation Mono&quot;, monospace;color:#858585'>11</div><div class='t' style='left:155.10000000000036px;top:419.5px;font-size:24px;line-height:36px;font-family:&quot;Liberation Mono&quot;, monospace;'><span style='color:#da70d6'>]</span></div><div class='t' style='left:-25.5px;width:100px;text-align:right;top:455.5px;font-size:24px;line-height:36px;font-family:&quot;Liberation Mono&quot;, monospace;color:#858585'>12</div><div class='t' style='left:126.30000000000018px;top:455.5px;font-size:24px;line-height:36px;font-family:&quot;Liberation Mono&quot;, monospace;'><span style='color:#ffd700'>}</span></div></div>
<div class='t' style="left:2209px;top:1059.9px;font-size:26px;line-height:26px;color:#ffffff;font-weight:400;font-family:'Liberation Sans', sans-serif;">MaxTokens</div>
<svg class='s' style='left:2347.6px;top:1058px;' width='16' height='16' viewBox='0 0 16 16'><g stroke='#e5534b' stroke-width='2.5' stroke-linecap='round'><line x1='8' y1='8' x2='8.00' y2='3.40'/><line x1='8' y1='8' x2='12.37' y2='6.58'/><line x1='8' y1='8' x2='10.70' y2='11.72'/><line x1='8' y1='8' x2='5.30' y2='11.72'/><line x1='8' y1='8' x2='3.63' y2='6.58'/></g></svg>
<svg class='s' style='left:2369.5px;top:1057px;' width='32' height='32' viewBox='0 0 32 32'><circle cx='16' cy='16' r='13.6' fill='none' stroke='#fff' stroke-width='2.2'/><rect x='14.6' y='15.2' width='2.9' height='8' fill='#fff'/><circle cx='16.05' cy='10.6' r='1.55' fill='#fff'/></svg>
<div class='b' style="left:2210.3px;top:1114px;width:239px;height:70.4px;border:2px solid #3d3d3d;border-radius:12px;"></div>
<div class='t' style="left:2234.8px;top:1134.4px;font-size:28px;line-height:28px;color:#ffffff;font-weight:400;font-family:'Liberation Sans', sans-serif;">Literal</div>
<svg class='s' style='left:2398.3px;top:1136px;' width='20' height='26' viewBox='0 0 20 26'><g fill='none' stroke='#9a9a9a' stroke-width='2.1' stroke-linecap='round' stroke-linejoin='round'><polyline points='4.5,8.5 10,3.5 15.5,8.5'/><polyline points='4.5,17.5 10,22.5 15.5,17.5'/></g></svg>
<div class='b' style="left:2466.4px;top:1114px;width:491.2px;height:70.4px;border:2px solid #3d3d3d;border-radius:12px;"></div>
<div class='t' style="left:2490.5px;top:1134.4px;font-size:28px;line-height:28px;color:#ffffff;font-weight:400;font-family:'Liberation Sans', sans-serif;">4096</div>
<div class='t' style="left:2209px;top:1207.6000000000001px;font-size:26px;line-height:26px;color:#ffffff;font-weight:400;font-family:'Liberation Sans', sans-serif;">ImageBlobId</div>
<svg class='s' style='left:2363.8px;top:1205.3px;' width='32' height='32' viewBox='0 0 32 32'><circle cx='16' cy='16' r='13.6' fill='none' stroke='#fff' stroke-width='2.2'/><rect x='14.6' y='15.2' width='2.9' height='8' fill='#fff'/><circle cx='16.05' cy='10.6' r='1.55' fill='#fff'/></svg>
<div class='b' style="left:2210.3px;top:1257.2px;width:239px;height:70.4px;border:2px solid #3d3d3d;border-radius:12px;"></div>
<div class='t' style="left:2234.8px;top:1277.6000000000001px;font-size:28px;line-height:28px;color:#ffffff;font-weight:400;font-family:'Liberation Sans', sans-serif;">Literal</div>
<svg class='s' style='left:2398.3px;top:1279.2px;' width='20' height='26' viewBox='0 0 20 26'><g fill='none' stroke='#9a9a9a' stroke-width='2.1' stroke-linecap='round' stroke-linejoin='round'><polyline points='4.5,8.5 10,3.5 15.5,8.5'/><polyline points='4.5,17.5 10,22.5 15.5,17.5'/></g></svg>
<div class='b' style="left:2466.4px;top:1257.2px;width:491.2px;height:70.4px;border:2px solid #3d3d3d;border-radius:12px;"></div>
<div class='b' style="left:2161.5px;top:1360px;width:813.0px;height:2px;background:#333333;"></div>
<div class='t' style="left:2208.5px;top:1399.4px;font-size:28px;line-height:28px;color:#ffffff;font-weight:400;font-family:'Liberation Sans', sans-serif;">Next Step</div>
<div class='t' style="left:2210px;top:1446.2px;font-size:24px;line-height:24px;color:#8f8f8f;font-weight:400;font-family:'Liberation Sans', sans-serif;">新增或選擇下一個節點</div>
<div class='t' style="left:2209px;top:1520.9px;font-size:26px;line-height:26px;color:#ffffff;font-weight:400;font-family:'Liberation Sans', sans-serif;">Success</div>
<div class='t' style="left:2209px;top:1609.9px;font-size:26px;line-height:26px;color:#ffffff;font-weight:400;font-family:'Liberation Sans', sans-serif;">Failure</div>
<div class='b' style="left:2426.8px;top:1498px;width:530.2px;height:71px;border:2px solid #3d3d3d;border-radius:12px;"></div>
<svg class='s' style='left:2586px;top:1520px;' width='28' height='28' viewBox='0 0 28 28'><g stroke='#fff' stroke-width='2.6'><line x1='3.5' y1='13.5' x2='23.7' y2='13.5'/><line x1='13.6' y1='3.2' x2='13.6' y2='23.8'/></g></svg>
<div class='t' style="left:2631.5px;top:1520.4px;font-size:28px;line-height:28px;color:#ffffff;font-weight:700;font-family:'Liberation Sans', sans-serif;-webkit-text-stroke:0;">新增目標節點</div>
<div class='b' style="left:2426.8px;top:1586px;width:530.2px;height:71px;border:2px solid #3d3d3d;border-radius:12px;"></div>
<svg class='s' style='left:2586px;top:1608px;' width='28' height='28' viewBox='0 0 28 28'><g stroke='#fff' stroke-width='2.6'><line x1='3.5' y1='13.5' x2='23.7' y2='13.5'/><line x1='13.6' y1='3.2' x2='13.6' y2='23.8'/></g></svg>
<div class='t' style="left:2631.5px;top:1608.4px;font-size:28px;line-height:28px;color:#ffffff;font-weight:700;font-family:'Liberation Sans', sans-serif;-webkit-text-stroke:0;">新增目標節點</div>
</body></html>
